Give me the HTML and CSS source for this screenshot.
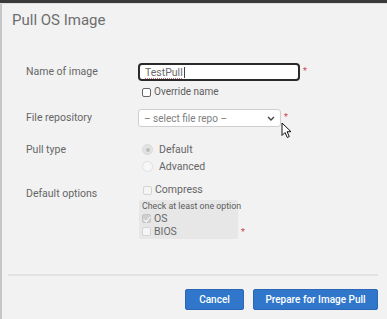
FILE: index.html
```html
<!DOCTYPE html>
<html lang="en">
<head>
	<meta charset="UTF-8">
	<meta name="viewport" content="width=device-width, initial-scale=1.0">
	<title>Pull OS Image</title>
	<link rel="stylesheet" href="styles.css">
</head>
<body>
	<div class="topbar"></div>
	<div class="dialog">
		<h1 class="title">Pull OS Image</h1>

		<div class="form">
			<div class="row row-name">
				<label class="label">Name of image</label>
				<div class="control">
					<div class="line">
						<div class="field"><span class="typed">TestPull</span><span class="caret"></span></div>
						<span class="req">*</span>
					</div>
					<label class="check check-override"><input type="checkbox"> Override name</label>
				</div>
			</div>

			<div class="row row-repo">
				<label class="label">File repository</label>
				<div class="control">
					<div class="line">
						<div class="select">
							<span>&ndash; select file repo &ndash;</span>
							<svg width="8" height="5" viewBox="0 0 8 5"><path d="M1 1 L4 4 L7 1" fill="none" stroke="#444" stroke-width="1.4"/></svg>
						</div>
						<span class="req">*</span>
					</div>
				</div>
			</div>

			<div class="row row-type">
				<label class="label">Pull type</label>
				<div class="control">
					<label class="radio"><span class="dot on"></span>Default</label>
					<label class="radio"><span class="dot"></span>Advanced</label>
				</div>
			</div>

			<div class="row row-opts">
				<label class="label label-opts">Default options</label>
				<div class="control">
					<label class="check check-light"><input type="checkbox" disabled> Compress</label>
					<div class="line line-group">
						<div class="group">
							<div class="hint">Check at least one option</div>
							<label class="check check-light"><input type="checkbox" checked disabled> OS</label>
							<label class="check check-light"><input type="checkbox" disabled> BIOS</label>
						</div>
						<span class="req req-group">*</span>
					</div>
				</div>
			</div>
		</div>

		<div class="footer">
			<button class="btn btn-cancel">Cancel</button>
			<button class="btn btn-go">Prepare for Image Pull</button>
		</div>
	</div>

	<svg class="pointer" width="12" height="17" viewBox="0 0 12 17"><path d="M1 1 L1 13.5 L4 10.5 L6.3 15.5 L8.3 14.6 L6.1 9.7 L10 9.7 Z" fill="#fff" stroke="#111" stroke-width="1" stroke-linejoin="round"/></svg>
</body>
</html>
```

FILE: styles.css
```css
body {
	margin: 0;
	background: #f2f2f2;
	font-family: Roboto, "Liberation Sans", sans-serif;
	color: #606060;
	height: 319px;
	overflow: hidden;
}

.topbar {
	height: 3px;
	background: #3a3a3a;
	border-bottom: 1px solid #dedede;
}

.dialog {
	border-left: 2px solid #c6c6c6;
	height: 315px;
	box-sizing: border-box;
}

.title {
	margin: 0;
	padding: 7px 0 0 10px;
	font-size: 15px;
	line-height: 18px;
	font-weight: 400;
	color: #6e6e6e;
}

.form { margin-top: 34px; padding-left: 24px; }

.row { display: flex; }
.row-repo { margin-top: 11px; }
.row-type { margin-top: 14px; }
.row-opts { margin-top: 8px; }

.label {
	width: 112px;
	flex: none;
	font-size: 10.5px;
	line-height: 18px;
	color: #666;
}
.row-type .label { line-height: 17px; }
.label-opts { padding-top: 4px; line-height: 14px; }

.line { display: flex; align-items: flex-start; }

.req { color: #d0464c; font-size: 9px; line-height: 9px; margin: 4px 0 0 3px; }

.field {
	width: 162px;
	height: 18px;
	box-sizing: border-box;
	border: 2px solid #2a2a2a;
	border-radius: 4px;
	background: #fff;
	display: flex;
	align-items: center;
	padding-left: 5px;
	font-size: 10.5px;
	color: #6a6a6a;
}
.typed {
	text-decoration: underline dotted #b86a6a;
	text-underline-offset: 2px;
}
.caret { width: 1px; height: 11px; background: #444; margin-left: 1px; }

.check {
	display: flex;
	align-items: center;
	font-size: 10px;
	line-height: 12px;
	color: #5e5e5e;
}
.check input {
	appearance: none;
	-webkit-appearance: none;
	width: 9px;
	height: 9px;
	margin: 0 3px 0 0;
	border: 1px solid #666;
	border-radius: 2px;
	background: #fff;
	position: relative;
}
.check-override { margin: 5px 0 0 4px; }
.check-light { color: #666; }
.check-light input { border-color: #d4d4d4; background: #f5f5f5; }
.check-light input:checked { background: #cfcfcf; border-color: #c4c4c4; }
.check-light input:checked::after {
	content: "";
	position: absolute;
	left: 2px;
	top: 0;
	width: 3px;
	height: 6px;
	border: solid #fff;
	border-width: 0 1.5px 1.5px 0;
	transform: rotate(40deg);
}
.row-opts .control > .check { margin-left: 5px; line-height: 14px; font-size: 10.5px; }

.select {
	width: 143px;
	height: 18px;
	box-sizing: border-box;
	border: 1px solid #cfcfcf;
	border-radius: 3px;
	background: #fff;
	display: flex;
	align-items: center;
	justify-content: space-between;
	padding: 0 5px 0 5px;
	font-size: 10px;
	color: #808080;
}

.radio {
	display: flex;
	align-items: center;
	font-size: 10.5px;
	line-height: 17px;
	color: #666;
}
.dot {
	width: 9px;
	height: 9px;
	border-radius: 50%;
	border: 1px solid #e0e0e0;
	background: #f7f7f7;
	margin: 0 6px 0 4px;
	box-sizing: content-box;
	position: relative;
}
.dot.on { background: #e2e2e2; border-color: #dadada; }
.dot.on::after {
	content: "";
	position: absolute;
	left: 2.5px;
	top: 2.5px;
	width: 4px;
	height: 4px;
	border-radius: 50%;
	background: #bdbdbd;
}

.line-group { margin-top: 3px; margin-left: 1px; }
.group {
	width: 99px;
	height: 39px;
	box-sizing: border-box;
	background: #e7e7e7;
	border-radius: 2px;
	padding: 1px 3px 0 3px;
}
.hint { font-size: 8.8px; line-height: 11px; color: #5c5c5c; white-space: nowrap; }
.group .check { line-height: 13px; font-size: 10.5px; }
.req-group { margin-top: 28px; }

.footer {
	margin: 35px 9px 0 6px;
	border-top: 2px solid #e2e2e2;
	padding-top: 13px;
	display: flex;
	justify-content: flex-end;
	gap: 9px;
}

.btn {
	height: 21px;
	border: 1px solid #2a67b5;
	border-radius: 2px;
	background: #3077cc;
	color: #fff;
	font-family: Roboto, "Liberation Sans", sans-serif;
	font-size: 10px;
	font-weight: 500;
	padding: 0;
}
.btn-cancel { width: 59px; }
.btn-go { width: 125px; }

.pointer { position: absolute; left: 281px; top: 122px; }
```
